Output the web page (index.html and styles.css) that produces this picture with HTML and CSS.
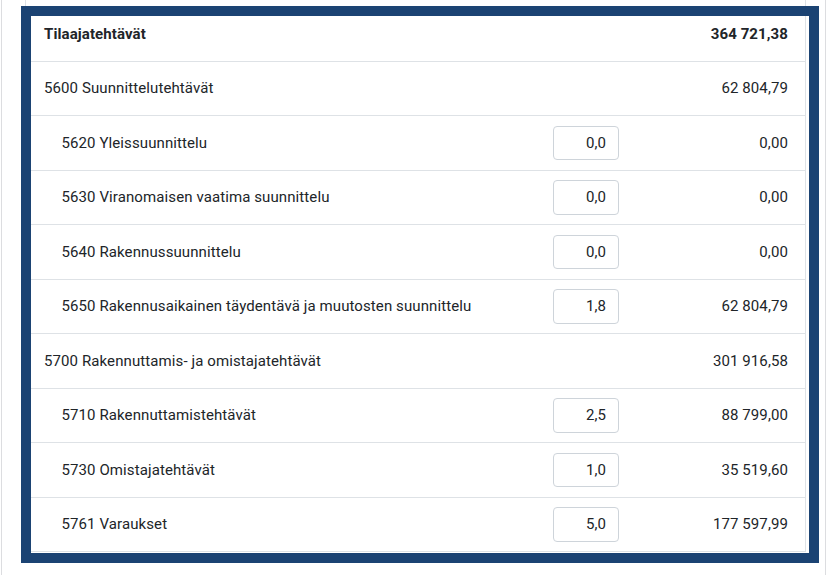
FILE: index.html
```html
<!DOCTYPE html>
<html lang="fi">
<head>
<meta charset="utf-8">
<title>Tilaajatehtävät</title>
<link rel="stylesheet" href="styles.css">
</head>
<body>
<div class="page">
  <div class="table">
    <div class="row level-0 total">
      <span class="label">Tilaajatehtävät</span>
      <span class="cell-input"></span>
      <span class="value">364 721,38</span>
    </div>
    <div class="row level-0">
      <span class="label">5600 Suunnittelutehtävät</span>
      <span class="cell-input"></span>
      <span class="value">62 804,79</span>
    </div>
    <div class="row level-1">
      <span class="label">5620 Yleissuunnittelu</span>
      <span class="cell-input"><input class="factor" type="text" value="0,0"></span>
      <span class="value">0,00</span>
    </div>
    <div class="row level-1">
      <span class="label">5630 Viranomaisen vaatima suunnittelu</span>
      <span class="cell-input"><input class="factor" type="text" value="0,0"></span>
      <span class="value">0,00</span>
    </div>
    <div class="row level-1">
      <span class="label">5640 Rakennussuunnittelu</span>
      <span class="cell-input"><input class="factor" type="text" value="0,0"></span>
      <span class="value">0,00</span>
    </div>
    <div class="row level-1">
      <span class="label">5650 Rakennusaikainen täydentävä ja muutosten suunnittelu</span>
      <span class="cell-input"><input class="factor" type="text" value="1,8"></span>
      <span class="value">62 804,79</span>
    </div>
    <div class="row level-0">
      <span class="label">5700 Rakennuttamis- ja omistajatehtävät</span>
      <span class="cell-input"></span>
      <span class="value">301 916,58</span>
    </div>
    <div class="row level-1">
      <span class="label">5710 Rakennuttamistehtävät</span>
      <span class="cell-input"><input class="factor" type="text" value="2,5"></span>
      <span class="value">88 799,00</span>
    </div>
    <div class="row level-1">
      <span class="label">5730 Omistajatehtävät</span>
      <span class="cell-input"><input class="factor" type="text" value="1,0"></span>
      <span class="value">35 519,60</span>
    </div>
    <div class="row level-1">
      <span class="label">5761 Varaukset</span>
      <span class="cell-input"><input class="factor" type="text" value="5,0"></span>
      <span class="value">177 597,99</span>
    </div>
  </div>
  <div class="focus-frame"></div>
</div>
</body>
</html>
```

FILE: styles.css
```css
* {
  box-sizing: border-box;
}

html, body {
  margin: 0;
  padding: 0;
  background: #ffffff;
}

body {
  font-family: Roboto, "Liberation Sans", Arial, sans-serif;
  font-size: 15px;
  letter-spacing: 0.1px;
  color: #212529;
}

.page {
  position: relative;
  margin-left: 1px;
  width: 825px;
  height: 575px;
  overflow: hidden;
  border-left: 1px solid #dcdde0;
  border-right: 1px solid #dcdde0;
  padding-left: 23px;
}

.table {
  width: 781px;
  border-left: 1px solid #dee2e6;
  border-right: 1px solid #dee2e6;
  padding-top: 7px;
}

.row {
  display: grid;
  grid-template-columns: 1fr 66px 169px;
  align-items: center;
  height: 54.5px;
  padding: 0 17px 0 18px;
  border-bottom: 1px solid #dee2e6;
}

.row.level-1 .label {
  padding-left: 17.5px;
}

.row.total {
  font-weight: 700;
}

.value {
  text-align: right;
}

.cell-input {
  display: flex;
}

.factor {
  width: 66px;
  height: 34.5px;
  border: 1px solid #ced4da;
  border-radius: 4px;
  padding: 0 12px;
  font-family: inherit;
  font-size: 15px;
  letter-spacing: 0.1px;
  color: #212529;
  text-align: right;
  background: #ffffff;
  outline: none;
}

.focus-frame {
  position: absolute;
  left: 19px;
  top: 6px;
  width: 798px;
  height: 557px;
  border: 10px solid #1b4373;
  pointer-events: none;
}
```
